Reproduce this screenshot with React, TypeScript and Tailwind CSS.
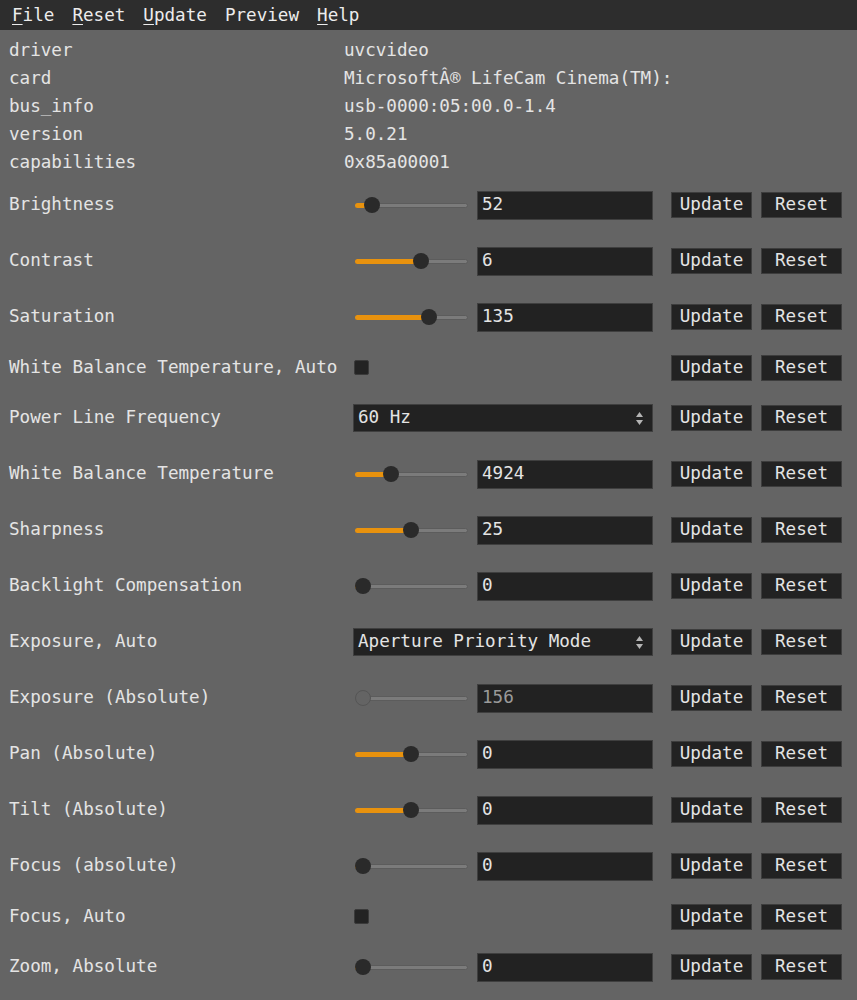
import React from "react";

type Row =
  | { label: string; kind: "slider"; pos: number; value: string; disabled?: boolean }
  | { label: string; kind: "check" }
  | { label: string; kind: "select"; value: string };

const info: [string, string][] = [
  ["driver", "uvcvideo"],
  ["card", "MicrosoftÂ® LifeCam Cinema(TM):"],
  ["bus_info", "usb-0000:05:00.0-1.4"],
  ["version", "5.0.21"],
  ["capabilities", "0x85a00001"],
];

// pos = handle centre offset along the track, in px (0..97)
const rows: Row[] = [
  { label: "Brightness", kind: "slider", pos: 9, value: "52" },
  { label: "Contrast", kind: "slider", pos: 58, value: "6" },
  { label: "Saturation", kind: "slider", pos: 66, value: "135" },
  { label: "White Balance Temperature, Auto", kind: "check" },
  { label: "Power Line Frequency", kind: "select", value: "60 Hz" },
  { label: "White Balance Temperature", kind: "slider", pos: 28, value: "4924" },
  { label: "Sharpness", kind: "slider", pos: 48, value: "25" },
  { label: "Backlight Compensation", kind: "slider", pos: 0, value: "0" },
  { label: "Exposure, Auto", kind: "select", value: "Aperture Priority Mode" },
  { label: "Exposure (Absolute)", kind: "slider", pos: 0, value: "156", disabled: true },
  { label: "Pan (Absolute)", kind: "slider", pos: 48, value: "0" },
  { label: "Tilt (Absolute)", kind: "slider", pos: 48, value: "0" },
  { label: "Focus (absolute)", kind: "slider", pos: 0, value: "0" },
  { label: "Focus, Auto", kind: "check" },
  { label: "Zoom, Absolute", kind: "slider", pos: 0, value: "0" },
];

function Slider({ pos, disabled }: { pos: number; disabled?: boolean }) {
  const center = 8 + pos;
  return (
    <div className="relative ml-[2px] h-4 w-[113px] shrink-0">
      <div className="absolute inset-x-0 top-[6px] h-[5px] rounded-full border border-[#5c5c5c] bg-[#7b7b7b]" />
      {!disabled && (
        <div
          className="absolute left-0 top-[6px] h-[5px] rounded-l-full bg-[#e8920e]"
          style={{ width: center }}
        />
      )}
      <div
        className={
          disabled
            ? "absolute top-0 h-4 w-4 rounded-full border border-[#555] bg-[#646464]"
            : "absolute top-0 h-4 w-4 rounded-full bg-[#2a2a2a]"
        }
        style={{ left: center - 8 }}
      />
    </div>
  );
}

function Btn({ children }: { children: React.ReactNode }) {
  return (
    <div className="flex h-[26px] w-[81px] items-center justify-center border border-[#3d3d3d] bg-[#222]">
      {children}
    </div>
  );
}

function Control({ row }: { row: Row }) {
  if (row.kind === "slider") {
    return (
      <div className="flex w-[300px] items-center gap-[9px]">
        <Slider pos={row.pos} disabled={row.disabled} />
        <div className="flex h-[29px] flex-1 items-center border border-[#3f3f3f] bg-[#222] pl-[4px]">
          <span className={row.disabled ? "text-[#9a9a9a]" : ""}>{row.value}</span>
        </div>
      </div>
    );
  }
  if (row.kind === "check") {
    return (
      <div className="flex w-[300px] items-center">
        <div className="ml-[1px] h-[15px] w-[15px] rounded-[2px] border border-[#3a3a3a] bg-[#232323]" />
      </div>
    );
  }
  return (
    <div className="flex h-[28px] w-[300px] items-center justify-between border border-[#3f3f3f] bg-[#222] pl-[4px] pr-[9px]">
      <span>{row.value}</span>
      <span className="flex flex-col items-center gap-[3px]">
        <svg width="7" height="5" viewBox="0 0 7 5">
          <path d="M3.5 0L7 5H0z" fill="#b5b5b5" />
        </svg>
        <svg width="7" height="5" viewBox="0 0 7 5">
          <path d="M0 0h7L3.5 5z" fill="#b5b5b5" />
        </svg>
      </span>
    </div>
  );
}

function Menu({ first, rest }: { first: string; rest: string }) {
  return (
    <span className="px-[9px]">
      <span className="underline underline-offset-[3px]">{first}</span>
      {rest}
    </span>
  );
}

export default function App() {
  return (
    <div
      className="min-h-[1000px] w-[857px] bg-[#646464] text-[17.6px] leading-none text-[#e4e4e4]"
      style={{ fontFamily: '"DejaVu Sans Mono", monospace' }}
    >
      <div className="flex h-[30px] items-center bg-[#2d2d2d] pl-[3px] pt-[1px] text-[#ececec]">
        <Menu first="F" rest="ile" />
        <Menu first="R" rest="eset" />
        <Menu first="U" rest="pdate" />
        <span className="px-[9px]">Preview</span>
        <Menu first="H" rest="elp" />
      </div>

      <div className="pt-[7px]">
        {info.map(([k, v]) => (
          <div key={k} className="flex h-7 items-center">
            <div className="w-[344px] shrink-0 pl-[9px]">{k}</div>
            <div className="whitespace-nowrap">{v}</div>
          </div>
        ))}
      </div>

      <div>
        {rows.map((row) => (
          <div
            key={row.label}
            className={
              row.kind === "check" ? "flex h-[45px] items-center" : "flex h-[56px] items-center"
            }
          >
            <div className="w-[353px] shrink-0 whitespace-nowrap pl-[9px]">{row.label}</div>
            <Control row={row} />
            <div className="ml-[18px] flex gap-[9px]">
              <Btn>Update</Btn>
              <Btn>Reset</Btn>
            </div>
          </div>
        ))}
      </div>
    </div>
  );
}
